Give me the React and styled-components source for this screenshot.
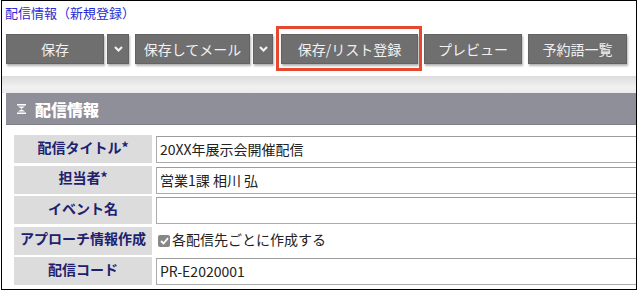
import React from "react";
import styled, { createGlobalStyle } from "styled-components";

const Global = createGlobalStyle`
  html, body { margin: 0; padding: 0; background: #fff; }
  body { font-family: "Noto Sans CJK JP", "Noto Sans", sans-serif; }
  * { box-sizing: border-box; }
`;

const Frame = styled.div`
  margin-left: 1px;
  width: 636px;
  height: 290px;
  border: 1px solid #000;
  overflow: hidden;
  background: #fff;
`;

const PageTitle = styled.div`
  margin: 3px 0 0 3px;
  height: 18px;
  font-size: 13px;
  line-height: 18px;
  color: #2a2ad2;
  white-space: nowrap;
`;

const Toolbar = styled.div`
  display: flex;
  align-items: center;
  gap: 6px;
  padding: 12px 0 0 4px;
`;

const SplitGroup = styled.div`
  display: flex;
  gap: 3px;
`;

const Button = styled.button`
  width: ${(p) => p.$w}px;
  height: 30px;
  padding: 0;
  border: 1px solid #626262;
  background: #6f6f6f;
  color: #f1f1f1;
  font-family: "Noto Sans CJK JP", sans-serif;
  font-size: 14px;
  line-height: 28px;
  white-space: nowrap;
  display: flex;
  align-items: center;
  justify-content: center;
  box-shadow: 1px 2px 2px rgba(0, 0, 0, 0.3);
  flex: none;
`;

const Highlight = styled.div`
  position: relative;
  margin-left: 2px;
  &::after {
    content: "";
    position: absolute;
    left: -5px;
    right: -4px;
    top: -8px;
    bottom: -7px;
    border: 3px solid #e6472f;
    pointer-events: none;
  }
`;

const Band = styled.div`
  margin-top: 12px;
  height: 17px;
  background: linear-gradient(to bottom, #dcdcdc, #f1f1f1 65%, #ebebeb);
`;

const Panel = styled.section`
  margin-left: 4px;
`;

const PanelHeader = styled.div`
  height: 32px;
  background: #8f8f99;
  border-bottom: 1px solid #7f7f88;
  display: flex;
  align-items: center;
  padding-left: 11px;
  gap: 9px;
  color: #fff;
  font-size: 16px;
  font-weight: 900;
  line-height: 20px;
`;

const FormGrid = styled.div`
  margin-top: 10px;
  margin-left: 8px;
  display: grid;
  grid-template-columns: 138px 1fr;
  grid-auto-rows: 28px;
  column-gap: 4px;
  row-gap: 2.5px;
`;

const Label = styled.div`
  background: #dcdcdc;
  color: #20206e;
  font-size: 14px;
  font-weight: bold;
  display: flex;
  align-items: center;
  justify-content: center;
  padding-bottom: 5px;
  white-space: nowrap;
`;

const Field = styled.div`
  display: flex;
  align-items: ${(p) => (p.$center ? "center" : "flex-start")};
  padding-top: ${(p) => (p.$center ? 0 : 1)}px;
  padding-left: ${(p) => (p.$center ? 2 : 0)}px;
`;

const TextBox = styled.div`
  width: 520px;
  height: 27px;
  border: 1px solid #acacac;
  border-top-color: #9c9c9c;
  background: #fff;
  color: #222;
  font-size: 14px;
  line-height: 24px;
  padding-left: 3px;
  white-space: nowrap;
`;

const Check = styled.span`
  width: 12px;
  height: 12px;
  border-radius: 2px;
  background: #878787;
  display: inline-flex;
  align-items: center;
  justify-content: center;
  margin-right: 2px;
`;

const CheckText = styled.span`
  font-size: 14px;
  color: #222;
  line-height: 20px;
  padding-bottom: 3px;
`;

const Caret = () => (
  <svg width="9" height="6" viewBox="0 0 9 6">
    <path d="M1 1 L4.5 4.5 L8 1" fill="none" stroke="#f1f1f1" strokeWidth="2.2" />
  </svg>
);

const Hourglass = () => (
  <svg width="9" height="10" viewBox="0 0 9 10">
    <path
      d="M0 0 H9 V1.6 H0z M1 2.4 H8 L4.5 4.7 z M4.5 5.3 L8 7.6 H1z M0 8.4 H9 V10 H0z"
      fill="#fff"
    />
  </svg>
);

const rows = [
  { label: "配信タイトル*", value: "20XX年展示会開催配信" },
  { label: "担当者*", value: "営業1課 相川 弘" },
  { label: "イベント名", value: "" },
  { label: "アプローチ情報作成", check: "各配信先ごとに作成する" },
  { label: "配信コード", value: "PR-E2020001" },
];

export default function App() {
  return (
    <>
      <Global />
      <Frame>
        <PageTitle>配信情報（新規登録）</PageTitle>
        <Toolbar>
          <SplitGroup>
            <Button $w={98}>保存</Button>
            <Button $w={22}><Caret /></Button>
          </SplitGroup>
          <SplitGroup>
            <Button $w={115}>保存してメール</Button>
            <Button $w={20}><Caret /></Button>
          </SplitGroup>
          <Highlight>
            <Button $w={137}>保存/リスト登録</Button>
          </Highlight>
          <Button $w={98}>プレビュー</Button>
          <Button $w={99}>予約語一覧</Button>
        </Toolbar>
        <Band />
        <Panel>
          <PanelHeader>
            <Hourglass />
            配信情報
          </PanelHeader>
          <FormGrid>
            {rows.map((r) => (
              <React.Fragment key={r.label}>
                <Label>{r.label}</Label>
                {r.check ? (
                  <Field $center>
                    <Check>
                      <svg width="9" height="8" viewBox="0 0 9 8">
                        <path d="M1 4 L3.5 6.5 L8 1.2" fill="none" stroke="#fff" strokeWidth="1.8" />
                      </svg>
                    </Check>
                    <CheckText>{r.check}</CheckText>
                  </Field>
                ) : (
                  <Field>
                    <TextBox>{r.value}</TextBox>
                  </Field>
                )}
              </React.Fragment>
            ))}
          </FormGrid>
        </Panel>
      </Frame>
    </>
  );
}
